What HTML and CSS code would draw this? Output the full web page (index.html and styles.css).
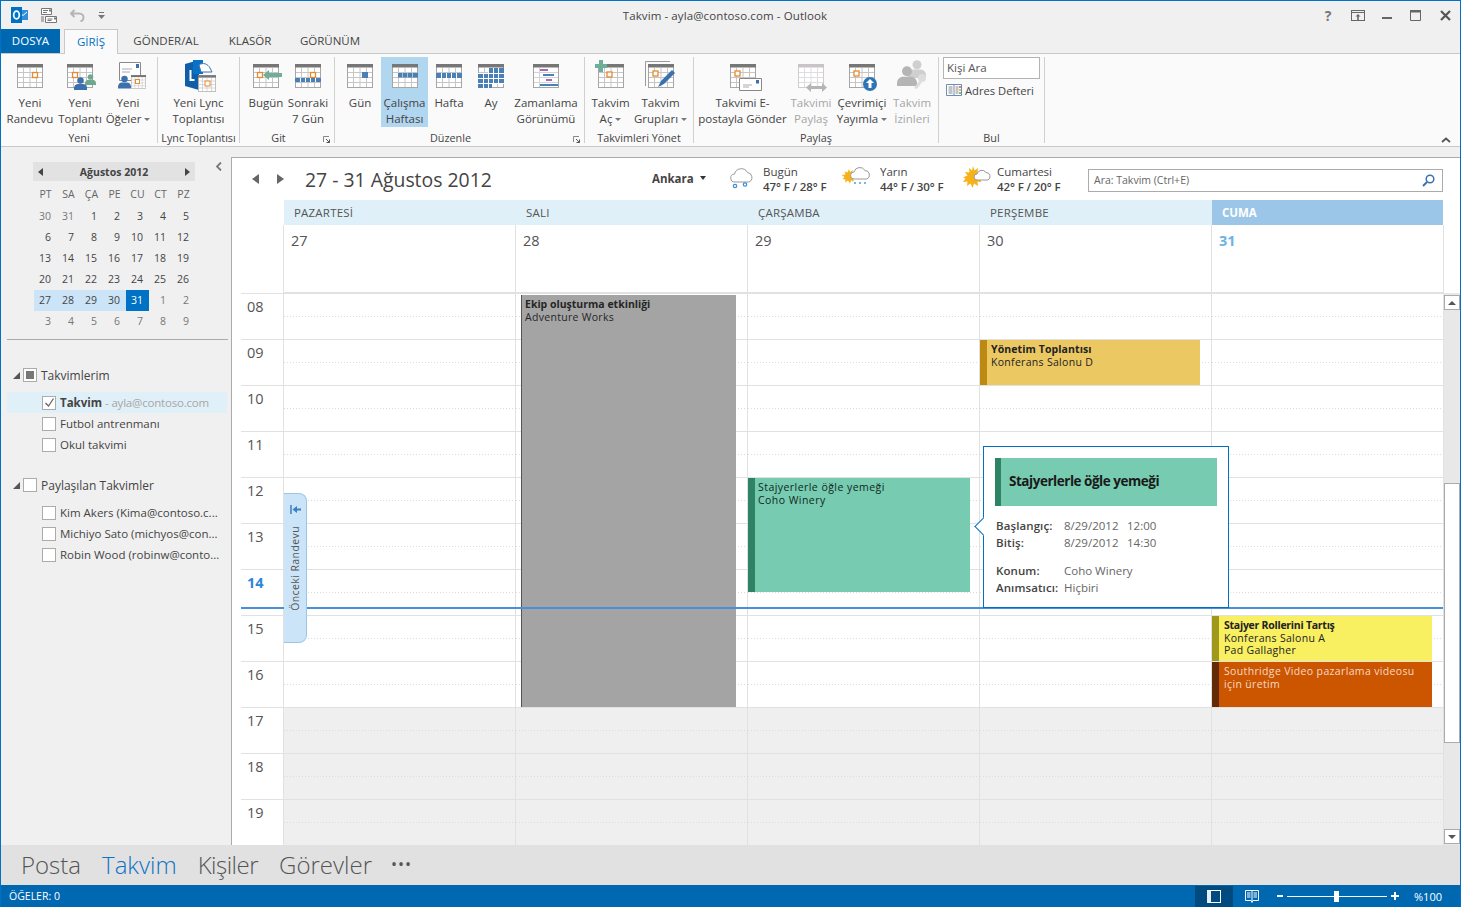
FILE: index.html
```html
<!DOCTYPE html>
<html lang="tr">
<head>
<meta charset="utf-8">
<title>Takvim - ayla@contoso.com - Outlook</title>
<link rel="stylesheet" href="styles.css">
</head>
<body>
<svg class="defs" width="0" height="0">
  <symbol id="cal" viewBox="0 0 26 24"><rect x=".5" y=".5" width="25" height="23" fill="#fff" stroke="#a6a6a6"/><path d="M6.5 4v19M13 4v19M19.5 4v19M1 8.5h24M1 13.5h24M1 18.5h24" stroke="#c6c6c6" fill="none"/><rect width="26" height="3.5" fill="#767676"/></symbol>
  <symbol id="calg" viewBox="0 0 26 24"><rect x=".5" y=".5" width="25" height="23" fill="#fff" stroke="#d0cdd0"/><path d="M6.5 4v19M13 4v19M19.5 4v19M1 8.5h24M1 13.5h24M1 18.5h24" stroke="#e0dde0" fill="none"/><rect width="26" height="3.5" fill="#c8c4c8"/></symbol>
  <symbol id="pers" viewBox="0 0 16 16"><circle cx="8" cy="4.2" r="4"/><path d="M0 16v-2.500c0-3 2.500-5 5-5h6c2.500 0 5 2 5 5v2.500z"/></symbol>
</svg>
<div class="app">
  <header class="titlebar">
    <div class="qat">
      <svg class="logo" width="17" height="16" viewBox="0 0 17 16"><rect x="6" y="3" width="11" height="10" fill="#2f8fd8"/><path d="M8 5l4 3.500 4-3.500" stroke="#fff" fill="none"/><rect y="0" width="11" height="16" fill="#0072c6"/><ellipse cx="5.500" cy="8" rx="2.800" ry="3.800" fill="none" stroke="#fff" stroke-width="1.700"/></svg>
      <svg class="qat-i" width="17" height="17" viewBox="0 0 17 17"><path d="M1.500 1.500h10v6h-10zM5.500 9.500h11v6h-11z" fill="#fff" stroke="#777"/><path d="M3 3.500h5M3 5.500h4M7.500 12h5M7.500 13.500h4M1 10h3M1 12h3M1 14h3" stroke="#777"/><rect x="9" y="2.500" width="2" height="2" fill="#777"/><rect x="14" y="10.500" width="2" height="2" fill="#777"/></svg>
      <svg class="qat-i undo" width="15" height="13" viewBox="0 0 15 13"><path d="M4.500 1L1 4.500 4.500 8M1.500 4.500H9c3 0 4.500 2 4.500 4s-1 3.500-3 4" stroke="#b5b5b5" stroke-width="2" fill="none"/></svg>
      <svg class="qat-i qat-more" width="7" height="7" viewBox="0 0 7 7"><path d="M1 0h5v1H1zM0 3h7L3.500 7z" fill="#777"/></svg>
    </div>
    <div class="wintitle">Takvim - ayla@contoso.com - Outlook</div>
    <div class="wincontrols">
      <span class="help">?</span>
      <svg class="ctl-opt" width="14" height="11" viewBox="0 0 14 11"><rect x=".5" y=".5" width="13" height="10" fill="none" stroke="#666"/><path d="M1 2.500h12" stroke="#666"/><path d="M7 4l-2.500 2.500h1.700V10h1.600V6.500h1.700z" fill="#666"/></svg>
      <svg class="ctl-min" width="10" height="3" viewBox="0 0 10 3"><rect width="10" height="2" y="1" fill="#666"/></svg>
      <svg class="ctl-max" width="11" height="11" viewBox="0 0 11 11"><path d="M.5.500h10v10H.500z" fill="none" stroke="#666"/><rect width="11" height="2.500" fill="#666"/></svg>
      <svg class="ctl-close" width="11" height="11" viewBox="0 0 11 11"><path d="M1 1l9 9M10 1l-9 9" stroke="#555" stroke-width="2.200"/></svg>
    </div>
  </header>

  <nav class="tabs">
    <div class="tab tab-file">DOSYA</div>
    <div class="tab tab-home">GİRİŞ</div>
    <div class="tab tab-send">GÖNDER/AL</div>
    <div class="tab tab-folder">KLASÖR</div>
    <div class="tab tab-view">GÖRÜNÜM</div>
  </nav>

  <section class="ribbon">
    <div class="group g1">
      <div class="btns">
        <div class="btn w50"><svg class="ico" viewBox="0 0 36 30"><use href="#cal" x="5" y="4" width="26" height="24"/><rect x="20.500" y="12.500" width="5" height="5" fill="#fff" stroke="#e58a2e" stroke-width="1.300"/></svg><span>Yeni<br>Randevu</span></div>
        <div class="btn w50"><svg class="ico" viewBox="0 0 36 30"><use href="#cal" x="5" y="4" width="26" height="24"/><rect x="10.500" y="12.500" width="5" height="5" fill="#fff" stroke="#e58a2e" stroke-width="1.300"/><use href="#pers" x="23" y="13" width="11" height="13" fill="#6fa88f"/><use href="#pers" x="12" y="16" width="13" height="15" fill="#3b71ac"/></svg><span>Yeni<br>Toplantı</span></div>
        <div class="btn w46"><svg class="ico" viewBox="0 0 36 30"><path d="M9.500 2.500h21v18h-21z" fill="#fff" stroke="#8a8a8a"/><path d="M12 9h10M12 12h8" stroke="#aaa"/><rect x="26" y="4" width="3" height="4" fill="#3b71ac"/><use href="#cal" x="21" y="14" width="15" height="16"/><rect x="25.500" y="19.500" width="4" height="4" fill="#fff" stroke="#e58a2e"/><use href="#pers" x="8" y="14" width="13" height="16" fill="#3b71ac"/></svg><span>Yeni<br>Öğeler<i class="caret"></i></span></div>
      </div>
      <div class="glabel">Yeni</div>
    </div>
    <div class="group g2">
      <div class="btns">
        <div class="btn w81"><svg class="ico" viewBox="0 0 36 30"><path d="M4 4l14-4v30l-14-4z" fill="#0e5fa8"/><rect x="12" y="0" width="10" height="14" fill="#0a72c6"/><path d="M18 5c4-3 9-1 11 3l2 4H20z" fill="#fff" stroke="#3b71ac"/><path d="M8.500 10v11h5v-2h-3v-9z" fill="#fff"/><use href="#cal" x="17" y="15" width="18" height="17"/><rect x="24" y="21" width="5" height="5" fill="#fff" stroke="#e58a2e"/></svg><span>Yeni Lync<br>Toplantısı</span></div>
      </div>
      <div class="glabel">Lync Toplantısı</div>
    </div>
    <div class="group g3">
      <div class="btns">
        <div class="btn w42"><svg class="ico" viewBox="0 0 36 30"><use href="#cal" x="5" y="4" width="26" height="24"/><rect x="9.500" y="12.500" width="5" height="5" fill="#fff" stroke="#e58a2e" stroke-width="1.300"/><path d="M15 15l6-5v3h13v4H21v3z" fill="#6fae98"/></svg><span>Bugün</span></div>
        <div class="btn w42"><svg class="ico" viewBox="0 0 36 30"><use href="#cal" x="5" y="4" width="26" height="24"/><rect x="20.500" y="12.500" width="5" height="5" fill="#fff" stroke="#e58a2e" stroke-width="1.300"/><rect x="5" y="18" width="26" height="4" fill="#4a7fb8"/><path d="M10.500 18v4M15.500 18v4M20.500 18v4M25.500 18v4" stroke="#fff"/></svg><span>Sonraki<br>7 Gün</span></div>
      </div>
      <div class="glabel pad-launch">Git</div>
      <svg class="launch" width="7" height="7" viewBox="0 0 7 7"><path d="M.5 6V.500H6" stroke="#888" fill="none"/><path d="M3 3l3.500 3.500M6.500 3.500v3h-3" stroke="#555" fill="none"/></svg>
    </div>
    <div class="group g4">
      <div class="btns">
        <div class="btn w42"><svg class="ico" viewBox="0 0 36 30"><use href="#cal" x="5" y="4" width="26" height="24"/><rect x="20" y="12" width="6" height="6" fill="#4a7fb8"/></svg><span>Gün</span></div>
        <div class="btn w47 on"><svg class="ico" viewBox="0 0 36 30"><use href="#cal" x="5" y="4" width="26" height="24"/><path d="M11 13h4.500v4.500H11zM16 13h4.500v4.500H16zM21 13h4.500v4.500H21zM26 13h5v4.500h-5z" fill="#4a7fb8"/></svg><span>Çalışma<br>Haftası</span></div>
        <div class="btn w42"><svg class="ico" viewBox="0 0 36 30"><use href="#cal" x="5" y="4" width="26" height="24"/><rect x="5" y="13" width="26" height="5" fill="#4a7fb8"/><path d="M10.500 13v5M15.500 13v5M20.500 13v5M25.500 13v5" stroke="#fff"/></svg><span>Hafta</span></div>
        <div class="btn w42"><svg class="ico" viewBox="0 0 36 30"><use href="#cal" x="5" y="4" width="26" height="24"/><path d="M16 8h15v5H16zM5 13h26v10H5zM5 23h14v5H5z" fill="#4a7fb8"/><path d="M10.500 13v15M15.500 8v20M20.500 8v15M25.500 8v15M5 13.500h26M5 18.500h26M5 23.500h26" stroke="#fff"/></svg><span>Ay</span></div>
        <div class="btn w68"><svg class="ico" viewBox="0 0 36 30"><rect x="5.500" y="4.500" width="25" height="23" fill="#fff" stroke="#a6a6a6"/><rect x="5" y="4" width="26" height="3.500" fill="#767676"/><path d="M11.500 8v19M6 12.500h24M6 17.500h24M6 22.500h24" stroke="#d4d4d4"/><rect x="12" y="9" width="8" height="2" fill="#a66bb8"/><rect x="15" y="14" width="11" height="2" fill="#4a7fb8"/><rect x="18" y="19" width="6" height="2" fill="#a66bb8"/><rect x="12" y="24" width="18" height="2" fill="#4a7fb8"/></svg><span>Zamanlama<br>Görünümü</span></div>
      </div>
      <div class="glabel pad-launch">Düzenle</div>
      <svg class="launch" width="7" height="7" viewBox="0 0 7 7"><path d="M.5 6V.500H6" stroke="#888" fill="none"/><path d="M3 3l3.500 3.500M6.500 3.500v3h-3" stroke="#555" fill="none"/></svg>
    </div>
    <div class="group g5">
      <div class="btns">
        <div class="btn w47"><svg class="ico" viewBox="0 0 36 30"><use href="#cal" x="5" y="4" width="26" height="24"/><rect x="14" y="12" width="5" height="5" fill="#fff" stroke="#e58a2e" stroke-width="1.300"/><path d="M6 0h4v4h4v4h-4v4H6V8H2V4h4z" fill="#6fae98"/></svg><span>Takvim<br>Aç<i class="caret"></i></span></div>
        <div class="btn w53"><svg class="ico" viewBox="0 0 36 30"><path d="M2.500 26V1.500H27" fill="none" stroke="#999"/><use href="#cal" x="5" y="4" width="26" height="24"/><rect x="10" y="11" width="5" height="5" fill="#fff" stroke="#e58a2e" stroke-width="1.300"/><path d="M15 27l3-6 11-11 3 3-11 11z" fill="#3b71ac"/></svg><span>Takvim<br>Grupları<i class="caret"></i></span></div>
      </div>
      <div class="glabel">Takvimleri Yönet</div>
    </div>
    <div class="group g6">
      <div class="btns">
        <div class="btn w91"><svg class="ico" viewBox="0 0 36 30"><use href="#cal" x="5" y="4" width="26" height="24"/><rect x="10" y="11" width="5" height="5" fill="#fff" stroke="#e58a2e" stroke-width="1.300"/><path d="M14.500 18.500h22v12h-22z" fill="#fff" stroke="#888"/><path d="M18 25h9M18 27h6" stroke="#aaa"/><rect x="31" y="20" width="3" height="3.500" fill="#3b71ac"/></svg><span>Takvimi E-<br>postayla Gönder</span></div>
        <div class="btn w46 dis"><svg class="ico" viewBox="0 0 36 30"><use href="#calg" x="5" y="4" width="26" height="24"/><path d="M13 27.500l5-4.500v3h11v-3l5 4.500-5 4.500v-3H18v3z" fill="#b5b5b5"/></svg><span>Takvimi<br>Paylaş</span></div>
        <div class="btn w56"><svg class="ico" viewBox="0 0 36 30"><use href="#cal" x="5" y="4" width="26" height="24"/><rect x="10" y="11" width="5" height="5" fill="#fff" stroke="#e58a2e" stroke-width="1.300"/><circle cx="26" cy="24" r="7" fill="#2e75b6"/><path d="M26 19l-4 4h2.500v5h3v-5H30z" fill="#fff"/></svg><span>Çevrimiçi<br>Yayımla<i class="caret"></i></span></div>
        <div class="btn w44 dis"><svg class="ico" viewBox="0 0 36 30"><use href="#pers" x="14" y="0" width="18" height="18" fill="#cfcfcf"/><use href="#pers" x="3" y="6" width="20" height="20" fill="#b5b5b5"/><circle cx="28" cy="18" r="4" fill="#ddd"/><path d="M26 20l-6 8 3 1 5-7z" fill="#ddd"/></svg><span>Takvim<br>İzinleri</span></div>
      </div>
      <div class="glabel">Paylaş</div>
    </div>
    <div class="group g7">
      <div class="find">
        <div class="people">Kişi Ara</div>
        <div class="addr"><svg width="16" height="12" viewBox="0 0 16 12"><path d="M.5.500h15v11H.500z" fill="#fff" stroke="#6d8eb4"/><path d="M8 1v10" stroke="#6d8eb4"/><path d="M2.500 3h4M2.500 5h4M2.500 7h4M2.500 9h4M9.500 3h3M9.500 5h3M9.500 7h3M9.500 9h3" stroke="#888"/><path d="M14 2v2" stroke="#d9534f" stroke-width="1.500"/><path d="M14 5v2" stroke="#e5a52e" stroke-width="1.500"/><path d="M14 8v2" stroke="#5aa469" stroke-width="1.500"/></svg>Adres Defteri</div>
      </div>
      <div class="glabel">Bul</div>
    </div>
    <svg class="collapse" width="10" height="6" viewBox="0 0 10 6"><path d="M1 5l4-3.500L9 5" stroke="#555" stroke-width="1.800" fill="none"/></svg>
  </section>

  <div class="workspace">
    <aside class="sidebar">
      <div class="mini-wrap">
        <div class="mini">
          <div class="mini-head"><i class="tri-l"></i><b>Ağustos 2012</b><i class="tri-r"></i></div>
          <div class="mini-grid">
            <div class="wd">PT</div><div class="wd">SA</div><div class="wd">ÇA</div><div class="wd">PE</div><div class="wd">CU</div><div class="wd">CT</div><div class="wd">PZ</div>
            <div class="d o">30</div><div class="d o">31</div><div class="d">1</div><div class="d">2</div><div class="d">3</div><div class="d">4</div><div class="d">5</div>
            <div class="d">6</div><div class="d">7</div><div class="d">8</div><div class="d">9</div><div class="d">10</div><div class="d">11</div><div class="d">12</div>
            <div class="d">13</div><div class="d">14</div><div class="d">15</div><div class="d">16</div><div class="d">17</div><div class="d">18</div><div class="d">19</div>
            <div class="d">20</div><div class="d">21</div><div class="d">22</div><div class="d">23</div><div class="d">24</div><div class="d">25</div><div class="d">26</div>
            <div class="d wk">27</div><div class="d wk">28</div><div class="d wk">29</div><div class="d wk">30</div><div class="d sel">31</div><div class="d o">1</div><div class="d o">2</div>
            <div class="d o">3</div><div class="d o">4</div><div class="d o">5</div><div class="d o">6</div><div class="d o">7</div><div class="d o">8</div><div class="d o">9</div>
          </div>
        </div>
        <svg class="side-collapse" width="6" height="9" viewBox="0 0 6 9"><path d="M5 .5L1 4.500 5 8.500" stroke="#777" stroke-width="1.800" fill="none"/></svg>
      </div>
      <div class="divider"></div>
      <div class="tree-head first"><i class="expander"></i><i class="check mixed"></i><span>Takvimlerim</span></div>
      <div class="tree-item current"><i class="check checked"><svg width="11" height="11" viewBox="0 0 11 11"><path d="M1.500 6l3 3 5-7.500" stroke="#666" stroke-width="1.300" fill="none"/></svg></i><span><b>Takvim</b> <em>- ayla@contoso.com</em></span></div>
      <div class="tree-item"><i class="check"></i><span>Futbol antrenmanı</span></div>
      <div class="tree-item"><i class="check"></i><span>Okul takvimi</span></div>
      <div class="tree-head second"><i class="expander"></i><i class="check"></i><span>Paylaşılan Takvimler</span></div>
      <div class="tree-item"><i class="check"></i><span>Kim Akers (Kima@contoso.c...</span></div>
      <div class="tree-item"><i class="check"></i><span>Michiyo Sato (michyos@con...</span></div>
      <div class="tree-item"><i class="check"></i><span>Robin Wood (robinw@conto...</span></div>
    </aside>

    <main class="main">
      <div class="toolbar">
        <i class="nav-l"></i><i class="nav-r"></i>
        <h1 class="range">27 - 31 Ağustos 2012</h1>
        <div class="city">Ankara<i class="city-caret"></i></div>
        <div class="wx wx1">
          <svg class="wx-i" width="34" height="24" viewBox="0 0 34 24"><path d="M6 16a4 4 0 0 1-.5-8 7 7 0 0 1 13-1.500A5 5 0 0 1 20 16z" fill="#fff" stroke="#999"/><circle cx="6" cy="20" r="1.700" fill="none" stroke="#3b8fd4" stroke-width="1.200"/><circle cx="16" cy="18.500" r="1.700" fill="none" stroke="#3b8fd4" stroke-width="1.200"/></svg>
          <div class="wx-t"><span>Bugün</span><b>47° F / 28° F</b></div>
        </div>
        <div class="wx wx2">
          <svg class="wx-i" width="38" height="24" viewBox="0 0 38 24"><path d="M7 3l1 3 3-2-1 3 4 .500-3 2 3 2-3 1 1 3-3-1-1 3-2-3-3 2 .500-3-3-.500 2-2-3-2 4-.500-1-3 3 1z" fill="#f7b21a"/><path d="M12 13a3.500 3.500 0 0 1 0-7 6 6 0 0 1 11-1.500A4.500 4.500 0 0 1 25 13z" fill="#fff" stroke="#999"/><path d="M13 16v3M18 16v3M23 16v3" stroke="#3b8fd4" stroke-width="1.300" stroke-dasharray="2 1"/></svg>
          <div class="wx-t"><span>Yarın</span><b>44° F / 30° F</b></div>
        </div>
        <div class="wx wx3">
          <svg class="wx-i" width="34" height="24" viewBox="0 0 34 24"><path d="M10 0l1.500 4.500L15 2l-.5 4 4-.500-2 3 4 2-4 2 2 3.500-4-.500.500 4.500-4-2.500-1.500 4.500-2-4.500-3.500 2.500.500-4.500-4.500.500 2.500-3.500L0 11.500l4.500-2-2.500-3.500 4.500.500L6 2l3 2.500z" fill="#f7b21a"/><path d="M14 14a3 3 0 0 1 0-6 5 5 0 0 1 9-1.500A4 4 0 0 1 25 14z" fill="#fff" stroke="#999"/></svg>
          <div class="wx-t"><span>Cumartesi</span><b>42° F / 20° F</b></div>
        </div>
        <div class="search"><span>Ara: Takvim (Ctrl+E)</span><svg width="13" height="13" viewBox="0 0 13 13"><circle cx="8" cy="5" r="3.800" fill="none" stroke="#3b71ac" stroke-width="1.500"/><path d="M5 8l-4 4" stroke="#3b71ac" stroke-width="2"/></svg></div>
      </div>

      <div class="dayheads">
        <div class="dh">PAZARTESİ</div><div class="dh">SALI</div><div class="dh">ÇARŞAMBA</div><div class="dh">PERŞEMBE</div><div class="dh today">CUMA</div>
      </div>
      <div class="dates">
        <div class="dn">27</div><div class="dn">28</div><div class="dn">29</div><div class="dn">30</div><div class="dn today">31</div>
      </div>

      <div class="hours">
        <div class="times">
          <div class="t">08</div><div class="t">09</div><div class="t">10</div><div class="t">11</div><div class="t">12</div><div class="t">13</div><div class="t now">14</div><div class="t">15</div><div class="t">16</div><div class="t">17</div><div class="t">18</div><div class="t">19</div>
        </div>
        <div class="col"><div class="work"></div><div class="afterhours"></div></div>
        <div class="col"><div class="work">
          <div class="ev ev-team"><b>Ekip oluşturma etkinliği</b><span>Adventure Works</span></div>
        </div><div class="afterhours"></div></div>
        <div class="col"><div class="work">
          <div class="ev ev-lunch"><span>Stajyerlerle öğle yemeği</span><span>Coho Winery</span></div>
        </div><div class="afterhours"></div></div>
        <div class="col"><div class="work">
          <div class="ev ev-meet"><b>Yönetim Toplantısı</b><span>Konferans Salonu D</span></div>
        </div><div class="afterhours"></div></div>
        <div class="col"><div class="work">
          <div class="ev ev-roles"><b>Stajyer Rollerini Tartış</b><span>Konferans Salonu A</span><span>Pad Gallagher</span></div>
          <div class="ev ev-video"><span>Southridge Video pazarlama videosu için üretim</span></div>
        </div><div class="afterhours"></div></div>
        <div class="scroll">
          <div class="sb-btn"><i class="sb-up"></i></div>
          <div class="sb-gap"></div>
          <div class="sb-thumb"></div>
          <div class="sb-rest"></div>
          <div class="sb-btn"><i class="sb-down"></i></div>
        </div>
        <div class="nowline"></div>
        <div class="prev-tab">
          <svg width="11" height="9" viewBox="0 0 11 9"><path d="M1 0v9" stroke="#3b7fc4" stroke-width="1.500"/><path d="M2.500 4.500L7 1v2.500h4v2H7V8z" fill="#3b7fc4"/></svg>
          <span>Önceki Randevu</span>
        </div>
      </div>

      <div class="popup">
        <div class="pop-title">Stajyerlerle öğle yemeği</div>
        <div class="pop-group">
          <div class="pop-row"><b>Başlangıç:</b><span class="pop-date">8/29/2012</span><span>12:00</span></div>
          <div class="pop-row"><b>Bitiş:</b><span class="pop-date">8/29/2012</span><span>14:30</span></div>
        </div>
        <div class="pop-group">
          <div class="pop-row"><b>Konum:</b><span>Coho Winery</span></div>
          <div class="pop-row"><b>Anımsatıcı:</b><span>Hiçbiri</span></div>
        </div>
      </div>
    </main>
  </div>

  <nav class="bottomnav">
    <span>Posta</span><span class="active">Takvim</span><span class="people-link">Kişiler</span><span>Görevler</span><span class="more">•••</span>
  </nav>

  <footer class="status">
    <span class="items">ÖĞELER: 0</span>
    <div class="view-normal"><i></i></div>
    <svg class="view-read" width="14" height="14" viewBox="0 0 14 14"><path d="M.5 1.500h13v10H8L7 13.500 6 11.500H.500z" fill="none" stroke="#fff"/><path d="M7 2v10M2 4h3.500M2 6h3.500M2 8h3.500M8.500 4H12M8.500 6H12M8.500 8H12" stroke="#fff"/></svg>
    <span class="zm-minus"></span>
    <div class="zm-track"><i></i></div>
    <span class="zm-plus"></span>
    <span class="zm-val">%100</span>
  </footer>
</div>
</body>
</html>
```
FILE: styles.css
```css
* { box-sizing: border-box; }
html, body { margin: 0; padding: 0; }
body { font-family: "Open Sans", "Noto Sans", sans-serif; font-size: 11.5px; color: #444; background: #f0f0f0; overflow: hidden; }
.defs { position: absolute; }
i, em { font-style: normal; }

.app { width: 1461px; height: 907px; display: flex; flex-direction: column; overflow: hidden; border-top: 1px solid #0072c6; border-left: 1px solid #0072c6; border-right: 1px solid #0072c6; background: #f0f0f0; }

/* title bar */
.titlebar { height: 28px; flex: none; display: flex; align-items: center; background: #f0f0f0; }
.qat { width: 599px; display: flex; align-items: center; flex: none; padding-left: 10px; }
.qat-i { margin-left: 12px; flex: none; }
.undo { margin-left: 13px; }
.qat-more { margin-left: 13px; }
.wintitle { width: 250px; text-align: center; color: #444; font-size: 11.5px; letter-spacing: .1px; }
.wincontrols { margin-left: auto; display: flex; align-items: center; padding-right: 7px; }
.help { font-weight: 700; color: #777; font-size: 14px; width: 12px; text-align: center; }
.ctl-opt { margin-left: 17px; }
.ctl-min { margin-left: 17px; margin-top: 5px; }
.ctl-max { margin-left: 18px; margin-right: 2px; }
.ctl-close { margin-left: 17px; margin-right: 2px; }

/* tabs */
.tabs { height: 25px; flex: none; display: flex; border-bottom: 1px solid #c8c8c8; }
.tab { height: 24px; line-height: 24px; text-align: center; font-size: 11.5px; color: #444; }
.tab-file { width: 59px; background: #0068b1; color: #fff; }
.tab-home { width: 54px; height: 25px; margin-left: 4px; background: #fafafa; color: #0072c6; border: 1px solid #c8c8c8; border-bottom: 0; }
.tab-send { width: 96px; }
.tab-folder { width: 72px; }
.tab-view { width: 88px; }

/* ribbon */
.ribbon { height: 93px; flex: none; display: flex; position: relative; padding: 3px 0; background: #fafafa; border-bottom: 1px solid #c8c8c8; }
.group { position: relative; border-right: 1px solid #d0d0d0; }
.g1 { width: 157px; padding-left: 4px; }
.g2 { width: 82px; }
.g3 { width: 95px; padding-left: 5px; }
.g4 { width: 250px; padding-left: 4px; }
.g5 { width: 109px; padding-left: 2px; }
.g6 { width: 245px; padding-left: 3px; }
.g7 { width: 106px; padding-left: 4px; }
.btns { display: flex; height: 70px; }
.btn { height: 70px; padding-top: 3px; text-align: center; line-height: 16px; color: #444; white-space: nowrap; flex: none; }
.btn span { display: block; margin-top: 5px; }
.ico { display: block; width: 36px; height: 30px; margin: 0 auto; overflow: visible; }
.w42 { width: 42px; } .w44 { width: 44px; } .w46 { width: 46px; } .w47 { width: 47px; } .w50 { width: 50px; } .w53 { width: 53px; } .w56 { width: 56px; } .w68 { width: 68px; } .w81 { width: 81px; } .w91 { width: 91px; }
.btn.on { background: #b1d6f0; }
.btn.dis { color: #a6a6a6; }
.caret { display: inline-block; width: 0; height: 0; margin-left: 3px; vertical-align: 2px; border: 3px solid transparent; border-top-color: #777; border-bottom: 0; }
.glabel { margin-top: 4px; text-align: center; line-height: 14px; font-size: 10.8px; color: #444; white-space: nowrap; }
.g1 .glabel { margin-left: -4px; }
.g6 .glabel { margin-left: -3px; }
.g5 .glabel { margin-left: -2px; }
.g7 .glabel { margin-left: -4px; }
.pad-launch { padding-right: 18px; margin-left: -4px; }
.launch { position: absolute; right: 4px; bottom: 0; }
.find { height: 70px; }
.people { width: 97px; height: 22px; line-height: 20px; padding-left: 3px; background: #fff; border: 1px solid #b4b4b4; color: #555; }
.addr { display: flex; align-items: center; gap: 3px; margin-top: 3px; padding-left: 3px; height: 16px; color: #444; font-size: 11.2px; }
.collapse { position: absolute; right: 9px; bottom: 3px; }

/* workspace */
.workspace { flex: 1; min-height: 0; display: flex; }
.sidebar { width: 230px; flex: none; }
.mini-wrap { display: flex; margin: 15px 0 0 32px; }
.mini { width: 162px; }
.mini-head { height: 19px; display: flex; align-items: center; justify-content: space-between; padding: 0 5px; background: #e2e2e2; font-size: 10.5px; color: #444; }
.tri-l { border: 4px solid transparent; border-left: 0; border-right: 5px solid #444; }
.tri-r { border: 4px solid transparent; border-right: 0; border-left: 5px solid #444; }
.mini-grid { display: grid; grid-template-columns: repeat(7, 23px); grid-template-rows: 22px; grid-auto-rows: 21px; margin: 3px 0 0 1px; font-size: 10.5px; line-height: 21px; }
.wd { text-align: center; color: #666; }
.d { text-align: right; padding-right: 6px; color: #444; }
.d.o { color: #777; }
.d.wk { background: #cce4f7; }
.d.sel { background: #0072c6; color: #fff; }
.side-collapse { margin-left: 21px; flex: none; }
.divider { height: 1px; margin: 7px 3px 0 6px; background: #ababab; }
.tree-head { height: 20px; display: flex; align-items: center; padding-left: 12px; font-size: 12px; color: #444; }
.tree-head.first { margin-top: 25px; margin-bottom: 7px; }
.tree-head.second { margin-top: 20px; margin-bottom: 7px; }
.expander { width: 0; height: 0; margin-right: 3px; border-left: 7px solid transparent; border-bottom: 7px solid #555; }
.check { width: 14px; height: 14px; flex: none; display: flex; align-items: center; justify-content: center; margin-right: 4px; background: #fff; border: 1px solid #ababab; }
.check.mixed::after { content: ""; width: 8px; height: 8px; background: #777; }
.tree-item { height: 21px; display: flex; align-items: center; margin-left: 6px; width: 220px; padding-left: 35px; color: #444; white-space: nowrap; font-size: 11.5px; }
.tree-item.current { background: #e0f0f9; }
.tree-item em { color: #a6a6a6; letter-spacing: -.2px; }

/* main */
.main { flex: 1; min-width: 0; margin-top: 10px; position: relative; display: flex; flex-direction: column; background: #fff; border-top: 1px solid #ababab; border-left: 1px solid #ababab; }
.toolbar { height: 42px; flex: none; display: flex; align-items: center; padding-left: 20px; }
.nav-l { border: 5px solid transparent; border-left: 0; border-right: 7px solid #666; }
.nav-r { border: 5px solid transparent; border-right: 0; border-left: 7px solid #666; margin-left: 18px; }
.range { width: 347px; margin: 1px 0 0 21px; font-size: 19.4px; font-weight: 400; color: #444; white-space: nowrap; }
.city { width: 77px; margin-top: -2px; font-weight: 700; font-size: 11.5px; color: #444; display: flex; align-items: center; }
.city-caret { margin-left: 6px; border: 3px solid transparent; border-top: 4px solid #333; border-bottom: 0; }
.wx { display: flex; align-items: center; flex: none; }
.wx1 { width: 113px; } .wx2 { width: 121px; } .wx3 { width: 125px; }
.wx-i { flex: none; margin-top: -3px; }
.wx-t { display: flex; flex-direction: column; line-height: 15px; white-space: nowrap; }
.wx-t b { font-weight: 600; letter-spacing: -.1px; }
.search { width: 355px; height: 23px; margin-top: 2px; flex: none; display: flex; align-items: center; justify-content: space-between; padding: 0 7px 0 5px; border: 1px solid #ababab; font-size: 10.5px; color: #666; }
.dayheads { height: 25px; flex: none; display: flex; margin: 0 17px 0 52px; }
.dh { width: 232px; line-height: 25px; padding-left: 10px; background: #e0f0f9; color: #555; font-size: 11.5px; letter-spacing: .2px; }
.dh.today { width: 231px; background: #9cc6e8; color: #fff; font-weight: 700; letter-spacing: 0; }
.dates { height: 68px; flex: none; display: flex; margin: 0 16px 0 51px; border-bottom: 1px solid #e1e1e1; border-right: 1px solid #e1e1e1; }
.dn { width: 232px; padding: 6px 0 0 7px; border-left: 1px solid #e1e1e1; font-size: 14.5px; line-height: 20px; color: #555; }
.dn.today { color: #6db3e4; font-weight: 700; }
.hours { flex: 1; min-height: 0; display: flex; position: relative; }
.times { width: 42px; margin-left: 9px; flex: none; }
.t { height: 46px; padding: 3px 0 0 6px; border-top: 1px solid #e1e1e1; font-size: 14.5px; line-height: 20px; color: #555; }
.t.now { color: #2b88d8; font-weight: 700; }
.col { width: 232px; flex: none; display: flex; flex-direction: column; border-left: 1px solid #e1e1e1; }
/* layers: hour line, then a band that hides the dots except on the half-hour row, then the dots */
.work, .afterhours {
  background-image:
    linear-gradient(180deg, #e1e1e1 1px, transparent 1px),
    linear-gradient(180deg, var(--cell) 23px, transparent 23px, transparent 24px, var(--cell) 24px),
    linear-gradient(90deg, #dcdcdc 1px, transparent 1px);
  background-size: 100% 46px, 100% 46px, 3px 100%;
  background-color: var(--cell);
}
.work { --cell: #fff; height: 414px; position: relative; }
.afterhours { --cell: #efefef; height: 138px; }

.ev { position: absolute; display: flex; flex-direction: column; font-size: 10.5px; line-height: 12.5px; color: #222; letter-spacing: .3px; }
.ev b { font-weight: 700; letter-spacing: 0; }
.ev-team { left: 5px; top: 2px; width: 215px; height: 412px; padding: 3px 0 0 3px; background: #a4a4a4; border-left: 1px solid #555; color: #262626; }
.ev-lunch { left: 0; top: 185px; width: 222px; height: 114px; padding: 3px 0 0 3px; background: #77cbb0; border-left: 7px solid #2e8365; color: #10281f; font-weight: 500; letter-spacing: .45px; }
.ev-meet { left: 0; top: 47px; width: 220px; height: 45px; padding: 3px 0 0 4px; background: #ebc862; border-left: 7px solid #bc8a12; }
.ev-meet b { letter-spacing: .1px; }
.ev-roles { left: 0; top: 323px; width: 220px; height: 45px; padding: 3px 0 0 5px; background: #f8ef61; border-left: 7px solid #a0981a; }
.ev-roles b { letter-spacing: -.25px; }
.ev-video { left: 0; top: 369px; width: 220px; height: 45px; padding: 3px 10px 0 5px; background: #cc5500; border-left: 7px solid #632a06; color: #f6d9c6; letter-spacing: .35px; }

.scroll { width: 17px; flex: none; display: flex; flex-direction: column; padding: 2px 0 1px; background: #e8e8e8; border-left: 1px solid #e1e1e1; }
.sb-btn { height: 15px; flex: none; display: flex; align-items: center; justify-content: center; background: #fff; border: 1px solid #ababab; }
.sb-up { border: 4px solid transparent; border-top: 0; border-bottom: 4px solid #555; }
.sb-down { border: 4px solid transparent; border-bottom: 0; border-top: 4px solid #555; }
.sb-gap { height: 173px; flex: none; }
.sb-thumb { height: 260px; flex: none; background: #fff; border: 1px solid #ababab; }
.sb-rest { flex: 1; }
.nowline { position: absolute; left: 9px; width: 1202px; top: 314px; height: 2px; background: #4a90d9; }
.prev-tab { position: absolute; left: 52px; top: 200px; width: 23px; height: 150px; display: flex; flex-direction: column; align-items: center; gap: 12px; padding-top: 11px; background: #cce4f7; border: 1px solid #9cc6e8; border-left: 0; border-radius: 0 8px 8px 0; font-size: 10.5px; letter-spacing: .4px; color: #555; }
.prev-tab span { writing-mode: vertical-rl; transform: rotate(180deg); white-space: nowrap; }

.popup { position: absolute; left: 751px; top: 288px; width: 246px; height: 162px; padding: 11px; background: #fff; border: 1px solid #0072c6; }
.popup::before { content: ""; position: absolute; left: -7px; top: 73px; width: 12px; height: 12px; background: #fff; border-left: 1px solid #0072c6; border-bottom: 1px solid #0072c6; transform: rotate(45deg); }
.pop-title { height: 48px; line-height: 46px; padding-left: 8px; background: #77cbb0; border-left: 6px solid #2e8365; font-size: 13.5px; font-weight: 700; color: #1a1a1a; letter-spacing: -.47px; white-space: nowrap; }
.pop-group { margin-top: 11px; padding-left: 1px; }
.pop-row { display: flex; height: 17px; line-height: 17px; color: #666; white-space: nowrap; }
.pop-row b { width: 68px; flex: none; font-weight: 600; color: #444; letter-spacing: .1px; }
.pop-date { width: 63px; flex: none; }

/* bottom nav */
.bottomnav { height: 40px; flex: none; display: flex; align-items: center; gap: 21px; padding: 0 0 2px 20px; background: #e1e1e1; font-size: 24px; font-weight: 300; color: #555; }
.bottomnav .active { color: #0f72c6; }
.bottomnav .people-link { letter-spacing: -.5px; }
.bottomnav .more { margin-left: -2px; font-size: 16px; font-weight: 400; letter-spacing: 1px; color: #555; }

/* status bar */
.status { height: 22px; flex: none; display: flex; align-items: center; margin: 0 -1px; padding-left: 9px; background: #0068b1; color: #fff; font-size: 10.5px; }
.items { width: 1186px; }
.view-normal { width: 38px; height: 21px; margin-top: 1px; display: flex; align-items: center; justify-content: center; background: #004a80; }
.view-normal i { width: 14px; height: 13px; border: 1px solid #fff; border-left: 4px solid #e8eef4; }
.view-read { margin-left: 12px; }
.zm-minus { width: 6px; height: 2px; margin-left: 18px; background: #fff; }
.zm-track { width: 100px; height: 1px; margin-left: 4px; position: relative; background: #fff; }
.zm-track i { position: absolute; left: 47px; top: -5px; width: 5px; height: 11px; background: #fff; }
.zm-plus { width: 8px; height: 8px; margin-left: 4px; background: linear-gradient(#fff, #fff) center / 100% 2px no-repeat, linear-gradient(#fff, #fff) center / 2px 100% no-repeat; }
.zm-val { margin-left: 15px; font-size: 11px; }
```
